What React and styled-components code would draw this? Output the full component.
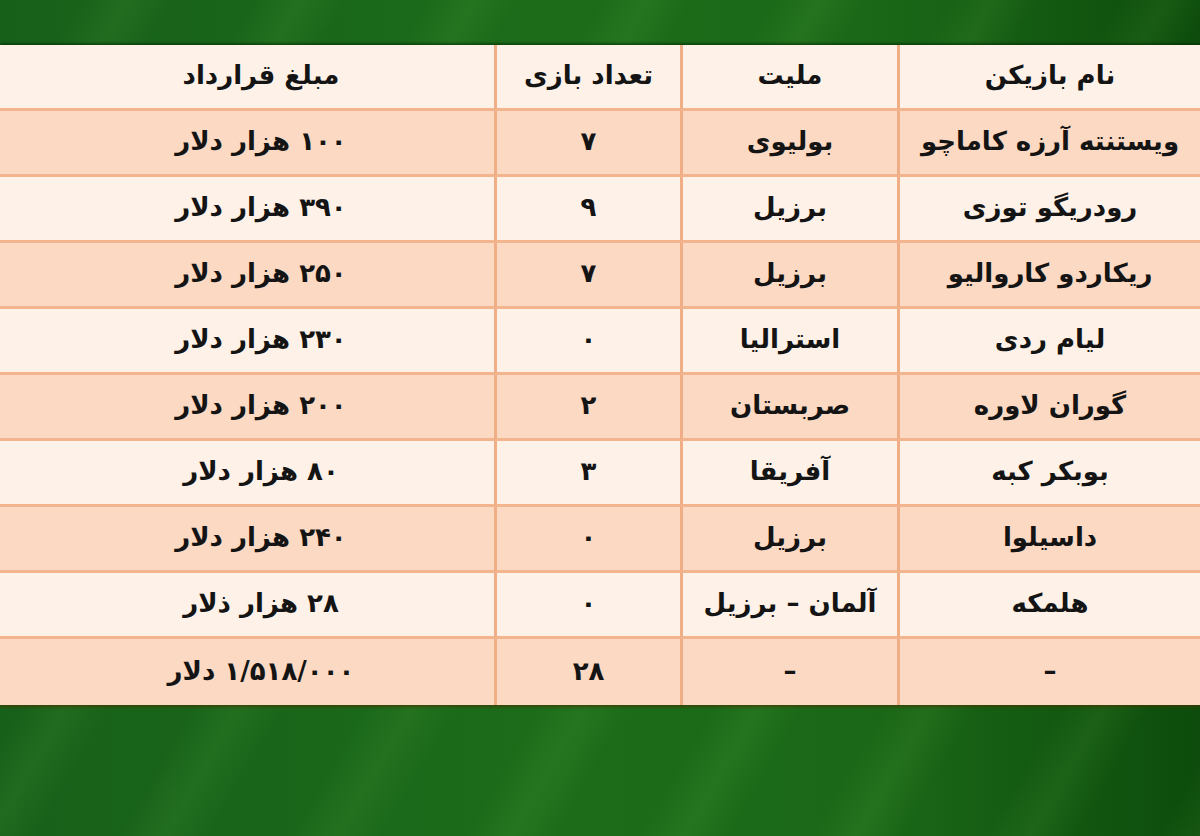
import React from 'react';
import styled, { createGlobalStyle } from 'styled-components';

const GlobalStyle = createGlobalStyle`
  html, body {
    margin: 0;
    padding: 0;
  }
  body {
    width: 1200px;
    height: 836px;
    overflow: hidden;
    font-family: "DejaVu Sans", "Noto Sans", sans-serif;
  }
`;

const Page = styled.div`
  width: 1200px;
  height: 836px;
  display: flex;
  flex-direction: column;
  padding-top: 45px;
  box-sizing: border-box;
  background:
    repeating-linear-gradient(
      120deg,
      rgba(255, 255, 255, 0) 0px,
      rgba(255, 255, 255, 0) 70px,
      rgba(130, 210, 90, 0.09) 110px,
      rgba(255, 255, 255, 0) 150px
    ),
    linear-gradient(90deg, #17601a 0%, #1c6c1a 45%, #1b6918 72%, #0d4c0c 100%);
`;

const Table = styled.div`
  display: grid;
  grid-template-columns: 303px 217px 186px 1fr;
  direction: rtl;
  background: #fdf1e8;
  box-shadow: 0 -2px 2px rgba(0, 40, 0, 0.5), 0 2px 3px rgba(70, 50, 0, 0.65);
`;

const Cell = styled.div`
  height: 66px;
  box-sizing: border-box;
  display: flex;
  align-items: center;
  justify-content: center;
  padding-bottom: 3px;
  background: ${({ $shade }) => ($shade ? '#fcd9c3' : '#fdf1e8')};
  border-bottom: ${({ $last }) => ($last ? 'none' : '3px solid #f2b58e')};
  border-left: ${({ $edge }) => ($edge ? 'none' : '3px solid #efae86')};
  padding-left: ${({ $edge }) => ($edge ? '28px' : '0')};
  color: #141414;
  font-weight: bold;
  font-size: 26px;
  white-space: nowrap;
`;

const headers = ['نام بازیکن', 'ملیت', 'تعداد بازی', 'مبلغ قرارداد'];

const rows = [
  ['ویستنته آرزه کاماچو', 'بولیوی', '۷', '۱۰۰ هزار دلار'],
  ['رودریگو توزی', 'برزیل', '۹', '۳۹۰ هزار دلار'],
  ['ریکاردو کاروالیو', 'برزیل', '۷', '۲۵۰ هزار دلار'],
  ['لیام ردی', 'استرالیا', '۰', '۲۳۰ هزار دلار'],
  ['گوران لاوره', 'صربستان', '۲', '۲۰۰ هزار دلار'],
  ['بوبکر کبه', 'آفریقا', '۳', '۸۰ هزار دلار'],
  ['داسیلوا', 'برزیل', '۰', '۲۴۰ هزار دلار'],
  ['هلمکه', 'آلمان – برزیل', '۰', '۲۸ هزار ذلار'],
  ['–', '–', '۲۸', '۱/۵۱۸/۰۰۰ دلار'],
];

export default function App() {
  const all = [headers, ...rows];
  return (
    <>
      <GlobalStyle />
      <Page>
        <Table>
          {all.map((row, r) =>
            row.map((text, c) => (
              <Cell
                key={`${r}-${c}`}
                $shade={r % 2 === 1}
                $last={r === all.length - 1}
                $edge={c === 3}
              >
                {text}
              </Cell>
            ))
          )}
        </Table>
      </Page>
    </>
  );
}
